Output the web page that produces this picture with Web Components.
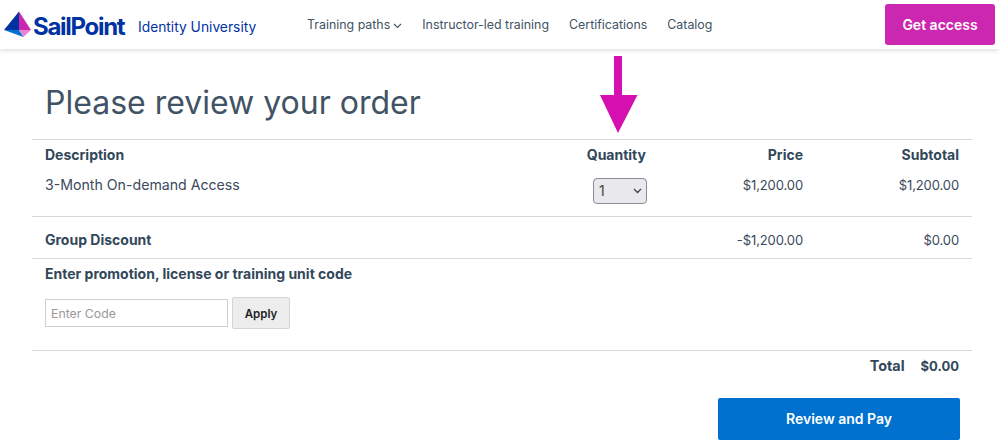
<!DOCTYPE html>
<html>
<head>
<meta charset="utf-8">
<title>Review your order</title>
<style>
  body { margin: 0; background: #fff; font-family: Inter, "Liberation Sans", sans-serif; color: #3b4a5c; overflow: hidden; }
</style>
</head>
<body>
<site-header></site-header>
<order-review></order-review>
<script>
class SiteHeader extends HTMLElement {
  connectedCallback() {
    this.attachShadow({ mode: 'open' });
    this.shadowRoot.innerHTML = `
      <style>
        :host { display: block; height: 49px; background: #fff; box-shadow: 0 1px 5px rgba(0,0,0,0.16); position: relative; z-index: 2; }
        .bar { display: flex; align-items: center; height: 49px; padding: 0 4px; }
        .logo { display: flex; align-items: center; width: 303px; flex: none; padding-top: 4px; box-sizing: border-box; height: 49px; }
        .logo svg { display: block; flex: none; margin-top: -5px; }
        .name { font: 700 24px Inter, sans-serif; letter-spacing: -1.3px; color: #0033a1; margin-left: 1px; }
        .dot { font-size: 6px; color: #0033a1; align-self: flex-end; margin: 0 0 13px 0; }
        .sub { font: 400 13.8px Inter, sans-serif; color: #0033a1; margin-left: 12px; white-space: nowrap; }
        nav { display: flex; flex: 1; gap: 20px; font-size: 12.4px; color: #415364; white-space: nowrap; }
        nav a { display: flex; align-items: center; gap: 3px; }
        nav svg { margin-top: 2px; }
        .cta { width: 110px; height: 41px; background: #cc27b0; color: #fff; font-size: 14px; font-weight: 600; border-radius: 3px; display: flex; align-items: center; justify-content: center; }
      </style>
      <div class="bar">
        <div class="logo">
          <svg width="28" height="28" viewBox="0 0 28 28">
            <polygon points="15,1.5 0,20 15,20" fill="#0033a1"/>
            <polygon points="15,1.5 27,20 15,20" fill="#cc27b0"/>
            <polygon points="0,20 15,20 19.5,27" fill="#0071ce"/>
            <polygon points="15,20 27,20 19.5,27" fill="#e884d6"/>
          </svg>
          <span class="name">SailPoint</span><span class="dot">.</span>
          <span class="sub">Identity University</span>
        </div>
        <nav>
          <a>Training paths
            <svg width="9" height="6" viewBox="0 0 9 6"><path d="M1 1l3.5 3.5L8 1" fill="none" stroke="#415364" stroke-width="1.1"/></svg>
          </a>
          <a>Instructor-led training</a>
          <a>Certifications</a>
          <a>Catalog</a>
        </nav>
        <div class="cta">Get access</div>
      </div>
    `;
  }
}
customElements.define('site-header', SiteHeader);

class OrderReview extends HTMLElement {
  connectedCallback() {
    this.attachShadow({ mode: 'open' });
    this.shadowRoot.innerHTML = `
      <style>
        :host { display: block; position: relative; margin: 0 27px 0 32px; font-size: 14px; color: #3b4a5c; }
        h1 { margin: 0; padding: 34px 13px 16px; font-size: 32px; line-height: 40px; font-weight: 400; color: #415364; }
        .row { display: grid; grid-template-columns: 1fr 110px 157px 156px; padding: 0 13px; border-top: 1px solid #d8d8d8; }
        .r { text-align: right; }
        b { font-weight: 700; color: #33475b; }
        .num { font-size: 13px; letter-spacing: -0.1px; }
        .items { height: 77px; padding-top: 5px; box-sizing: border-box; line-height: 20px; row-gap: 10px; grid-template-rows: 20px 20px; }
        .desc { font-size: 14.15px; }
        .discount { height: 37px; padding-top: 4px; align-items: center; }
        .promo { display: block; height: 92px; padding-top: 5px; box-sizing: border-box; }
        .promo b { display: block; line-height: 20px; }
        .code { display: flex; align-items: flex-start; gap: 4px; margin-top: 13px; }
        .input { width: 176px; height: 26px; border: 1px solid #cfcfcf; padding-left: 5px; margin-top: 2px; font-size: 12.3px; color: #999; line-height: 27px; }
        .apply { width: 58px; height: 32px; padding-top: 1px; background: #ededed; border: 1px solid #d4d4d4; border-radius: 2px; box-sizing: border-box; font-size: 11.5px; font-weight: 600; color: #222; display: flex; align-items: center; justify-content: center; }
        .select { justify-self: end; width: 54px; height: 26px; box-sizing: border-box; border: 1px solid #8d8d99; border-radius: 4px; background: #e9e9ed; display: flex; align-items: center; justify-content: space-between; padding: 0 4px 0 5px; color: #444; margin: 3px -1px 0 0; }
        .total { display: flex; justify-content: flex-end; gap: 16px; padding: 5px 13px 0; border-top: 1px solid #d8d8d8; line-height: 20px; font-weight: 700; color: #33475b; }
        .total .sum { font-size: 13px; }
        .total .lbl { font-size: 14.4px; }
        .pay-wrap { display: flex; justify-content: flex-end; padding: 22px 12px 0; }
        .pay { width: 242px; height: 42px; box-sizing: border-box; padding-bottom: 2px; background: #0071ce; color: #fff; border-radius: 2px; display: flex; align-items: center; justify-content: center; font-weight: 600; }
        .arrow { position: absolute; left: 568px; top: 7px; }
      </style>
      <h1>Please review your order</h1>
      <svg class="arrow" width="38" height="78" viewBox="0 0 38 78"><polygon points="14,0 22,0 22,39 37.5,39 18,77 0,39 14,39" fill="#d60fb0"/></svg>
      <div class="row items">
        <b>Description</b><b class="r">Quantity</b><b class="r">Price</b><b class="r">Subtotal</b>
        <span class="desc">3-Month On-demand Access</span>
        <div class="select"><span>1</span><svg width="9" height="6" viewBox="0 0 9 6"><path d="M1 1l3.5 3.5L8 1" fill="none" stroke="#444" stroke-width="1.3"/></svg></div>
        <span class="r num">$1,200.00</span><span class="r num">$1,200.00</span>
      </div>
      <div class="row discount">
        <b>Group Discount</b><span></span><span class="r num">-$1,200.00</span><span class="r num">$0.00</span>
      </div>
      <div class="row promo">
        <b>Enter promotion, license or training unit code</b>
        <div class="code"><div class="input">Enter Code</div><div class="apply">Apply</div></div>
      </div>
      <div class="total"><span class="lbl">Total</span><span class="sum">$0.00</span></div>
      <div class="pay-wrap"><div class="pay">Review and Pay</div></div>
    `;
  }
}
customElements.define('order-review', OrderReview);
</script>
</body>
</html>
